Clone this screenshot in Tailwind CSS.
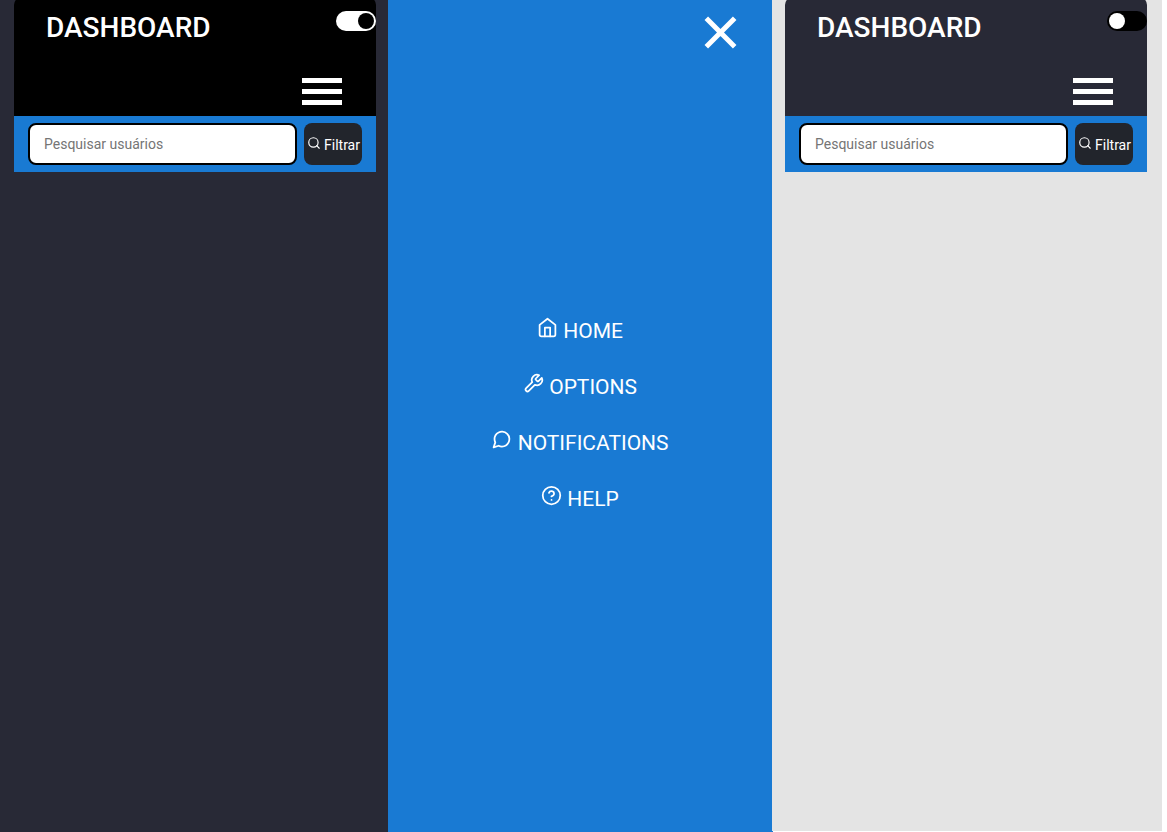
<!DOCTYPE html>
<html lang="pt-BR">
<head>
<meta charset="utf-8">
<title>Dashboard</title>
<script src="https://cdn.jsdelivr.net/npm/@tailwindcss/browser@4"></script>
</head>
<body class="flex h-[832px] w-[1167px] overflow-hidden bg-white font-['Roboto',sans-serif]">
  <section class="h-full w-[388px] shrink-0 bg-[#282936] pl-[14px]">
    <header class="-mt-[3px] flex h-[119px] w-[362px] flex-col rounded-t-[8px] bg-black pt-[3px] text-white">
      <div class="flex justify-between pl-8">
        <h1 class="pt-2 text-[28px] leading-10 font-medium">DASHBOARD</h1>
        <div class="mt-[11px] flex h-5 w-10 items-center justify-end rounded-full bg-white px-0.5"><span class="size-4 rounded-full bg-black"></span></div>
      </div>
      <div class="mt-[30px] mr-[34px] flex flex-col gap-1.5 self-end">
        <span class="h-[5px] w-10 bg-white"></span><span class="h-[5px] w-10 bg-white"></span><span class="h-[5px] w-10 bg-white"></span>
      </div>
    </header>
    <div class="flex h-14 w-[362px] gap-[7px] bg-[#197ad3] px-[14px] py-[7px]">
      <input class="h-[42px] w-[269px] rounded-[8px] border-2 border-black bg-white px-[14px] text-[14px] placeholder:text-[#757575]" placeholder="Pesquisar usuários">
      <button class="flex h-[42px] w-[58px] items-center rounded-[8px] bg-[#22252c] pl-[3px] text-[14px] whitespace-nowrap text-white">
        <svg class="mr-[3px] mb-[2px] size-[14px] shrink-0" viewBox="0 0 24 24" fill="none" stroke="currentColor" stroke-width="2" stroke-linecap="round" stroke-linejoin="round"><circle cx="11" cy="11" r="8"/><path d="M21 21l-4.35-4.35"/></svg>
        <span class="pt-[2px]">Filtrar</span>
      </button>
    </div>
  </section>

  <nav class="flex h-full w-[384px] shrink-0 flex-col bg-[#197ad3] text-[21px] text-white">
    <svg class="mt-4 mr-[35px] h-[33px] w-[33px] self-end" viewBox="0 0 33 33" fill="none" stroke="currentColor" stroke-width="5"><path d="M2.3 2.3L30.7 30.7M30.7 2.3L2.3 30.7"/></svg>
    <ul class="mt-[254px] text-center leading-[56px]">
      <li class="h-14"><svg class="inline size-[21px] align-baseline" viewBox="0 0 24 24" fill="none" stroke="currentColor" stroke-width="2" stroke-linecap="round" stroke-linejoin="round"><path d="M3 9l9-7 9 7v11a2 2 0 0 1-2 2H5a2 2 0 0 1-2-2z"/><path d="M9 22V12h6v10"/></svg> HOME</li>
      <li class="h-14"><svg class="inline size-[21px] align-baseline" viewBox="0 0 24 24" fill="none" stroke="currentColor" stroke-width="2" stroke-linecap="round" stroke-linejoin="round"><path d="M14.7 6.3a1 1 0 0 0 0 1.4l1.6 1.6a1 1 0 0 0 1.4 0l3.77-3.77a6 6 0 0 1-7.94 7.94l-6.91 6.91a2.12 2.12 0 0 1-3-3l6.91-6.91a6 6 0 0 1 7.94-7.94l-3.76 3.76z"/></svg> OPTIONS</li>
      <li class="h-14"><svg class="inline size-[21px] align-baseline" viewBox="0 0 24 24" fill="none" stroke="currentColor" stroke-width="2" stroke-linecap="round" stroke-linejoin="round"><path d="M21 11.5a8.38 8.38 0 0 1-.9 3.8 8.5 8.5 0 0 1-7.6 4.7 8.38 8.38 0 0 1-3.8-.9L3 21l1.9-5.7a8.38 8.38 0 0 1-.9-3.8 8.5 8.5 0 0 1 4.7-7.6 8.38 8.38 0 0 1 3.8-.9h.5a8.48 8.48 0 0 1 8 8v.5z"/></svg> NOTIFICATIONS</li>
      <li class="h-14"><svg class="inline size-[21px] align-baseline" viewBox="0 0 24 24" fill="none" stroke="currentColor" stroke-width="2" stroke-linecap="round" stroke-linejoin="round"><circle cx="12" cy="12" r="10"/><path d="M9.09 9a3 3 0 0 1 5.83 1c0 2-3 3-3 3M12 17h.01"/></svg> HELP</li>
    </ul>
  </nav>

  <section class="h-full w-[390px] shrink-0">
    <div class="flow-root h-[831px] bg-[#e4e4e4] pl-[13px]">
      <header class="-mt-[3px] flex h-[119px] w-[362px] flex-col rounded-t-[8px] bg-[#282936] pt-[3px] text-white">
        <div class="flex justify-between pl-8">
          <h1 class="pt-2 text-[28px] leading-10 font-medium">DASHBOARD</h1>
          <div class="mt-[11px] flex h-5 w-10 items-center rounded-full bg-black px-0.5"><span class="size-4 rounded-full bg-white"></span></div>
        </div>
        <div class="mt-[30px] mr-[34px] flex flex-col gap-1.5 self-end">
          <span class="h-[5px] w-10 bg-white"></span><span class="h-[5px] w-10 bg-white"></span><span class="h-[5px] w-10 bg-white"></span>
        </div>
      </header>
      <div class="flex h-14 w-[362px] gap-[7px] bg-[#197ad3] px-[14px] py-[7px]">
        <input class="h-[42px] w-[269px] rounded-[8px] border-2 border-black bg-white px-[14px] text-[14px] placeholder:text-[#757575]" placeholder="Pesquisar usuários">
        <button class="flex h-[42px] w-[58px] items-center rounded-[8px] bg-[#22252c] pl-[3px] text-[14px] whitespace-nowrap text-white">
          <svg class="mr-[3px] mb-[2px] size-[14px] shrink-0" viewBox="0 0 24 24" fill="none" stroke="currentColor" stroke-width="2" stroke-linecap="round" stroke-linejoin="round"><circle cx="11" cy="11" r="8"/><path d="M21 21l-4.35-4.35"/></svg>
          <span class="pt-[2px]">Filtrar</span>
        </button>
      </div>
    </div>
    <div class="h-px w-px bg-[#197ad3]"></div>
  </section>
</body>
</html>
